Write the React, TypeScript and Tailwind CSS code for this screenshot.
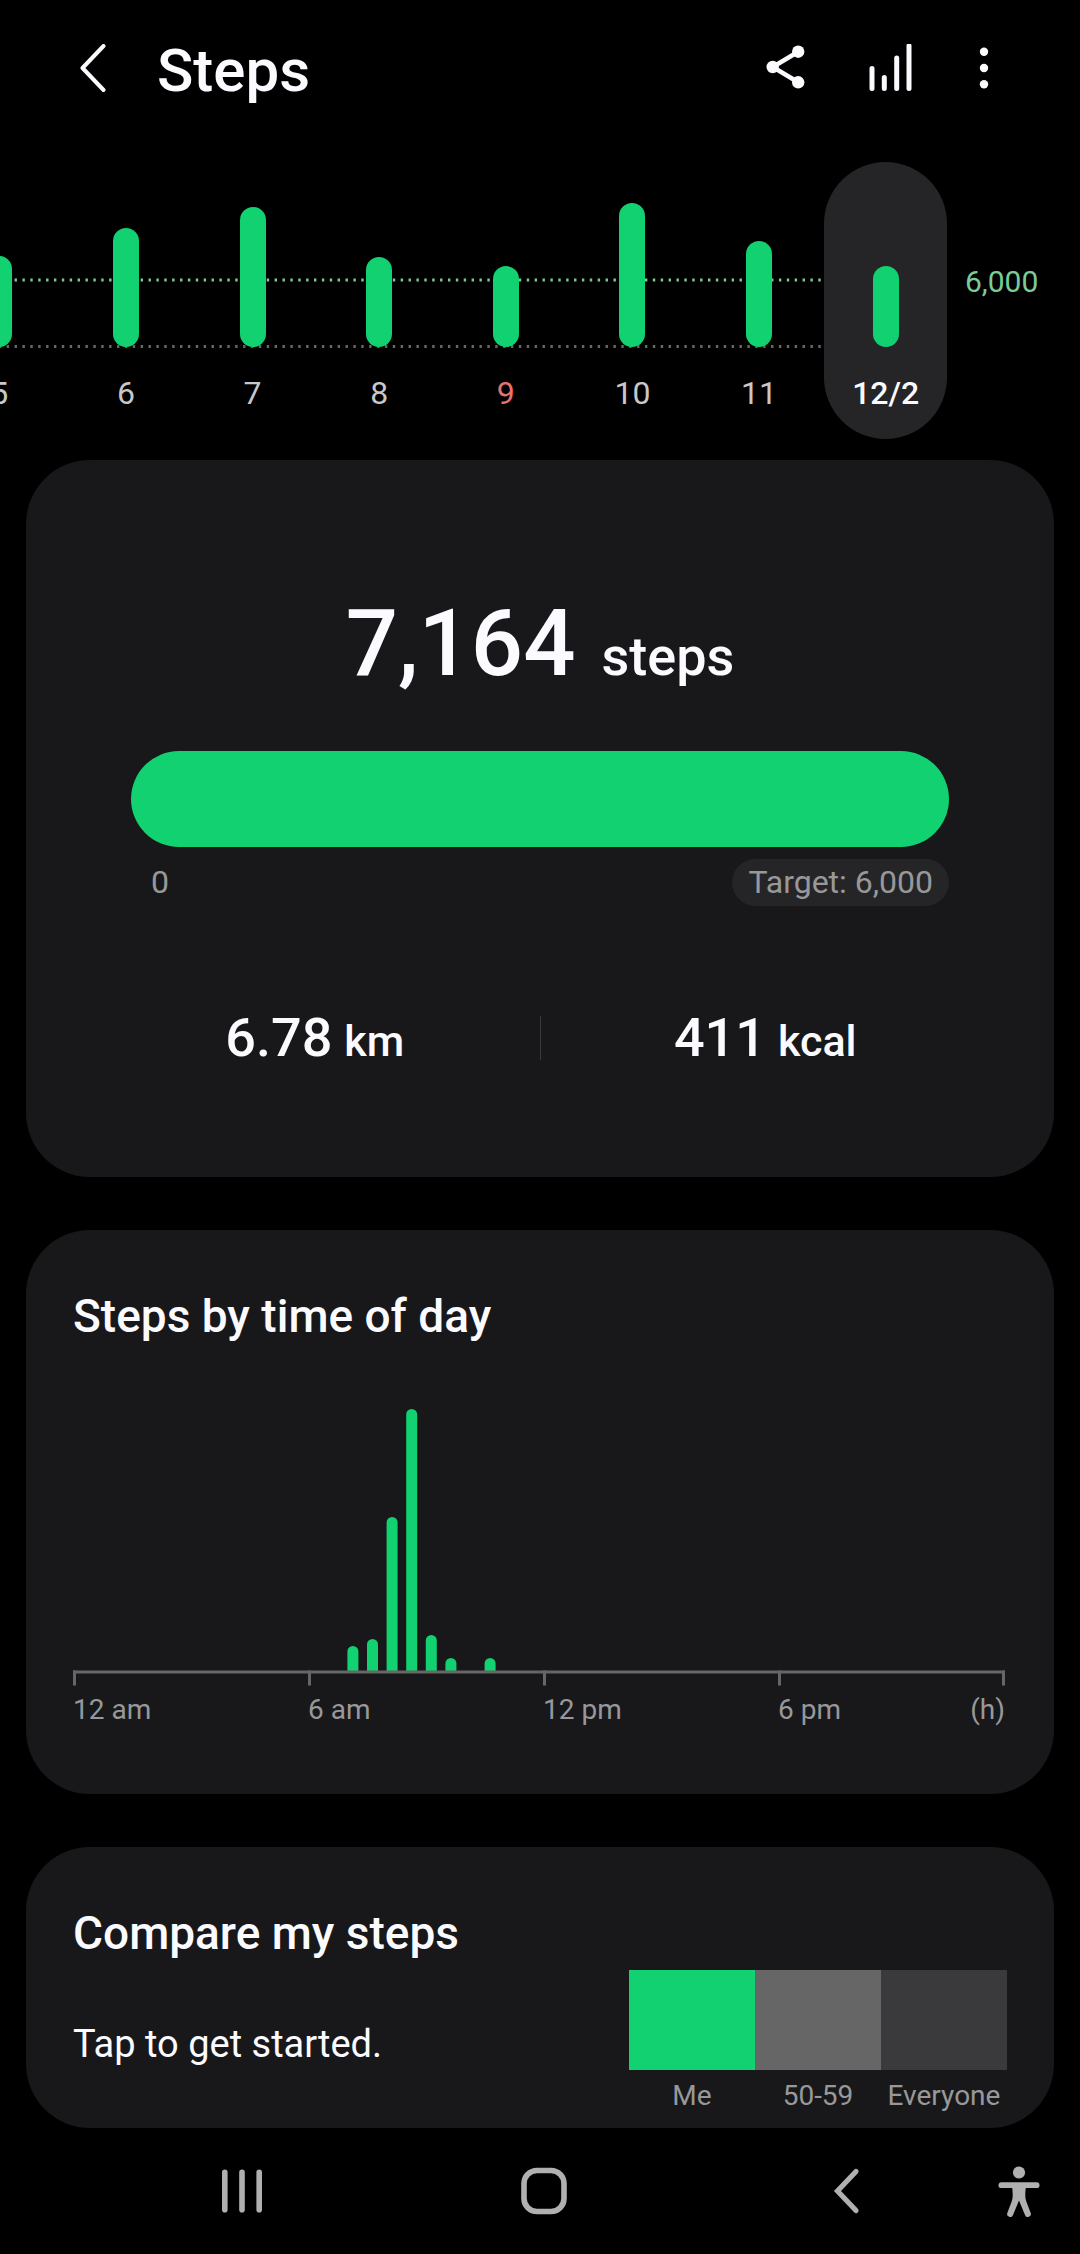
import React, { useState } from 'react';
import clsx from 'clsx';

const days = [
  { label: '5', height: 91 },
  { label: '6', height: 119 },
  { label: '7', height: 140 },
  { label: '8', height: 90 },
  { label: '9', height: 81, sunday: true },
  { label: '10', height: 144 },
  { label: '11', height: 106 },
  { label: '12/2', height: 81 },
];

// slot = half hour of the day
const halfHours = [
  { slot: 14, height: 25 },
  { slot: 15, height: 32 },
  { slot: 16, height: 154 },
  { slot: 17, height: 262 },
  { slot: 18, height: 36 },
  { slot: 19, height: 13 },
  { slot: 21, height: 13 },
];

const ticks = [0, 235, 470, 705, 929];

const groups = [
  { label: 'Me', color: 'bg-[#12d170]' },
  { label: '50-59', color: 'bg-[#666666]' },
  { label: 'Everyone', color: 'bg-[#3a3a3c]' },
];

const Header = () => (
  <header className="flex h-[136px] items-center pl-[69px] pr-[82px] text-[#fafaff]">
    <button aria-label="Back">
      <svg className="h-12 w-12" viewBox="0 0 48 48" fill="none" stroke="currentColor" strokeWidth="4" strokeLinecap="round" strokeLinejoin="round">
        <path d="M34.5 2L13.5 24L34.5 46" />
      </svg>
    </button>
    <h1 className="ml-10 flex-1 pt-1.5 text-[60px] leading-[72px] font-medium">Steps</h1>
    <div className="flex items-center gap-14">
      <button aria-label="Share">
        <svg className="h-12 w-12" viewBox="0 0 48 48" fill="currentColor">
          <path d="M36.2 7.7L10.7 23L36.2 38.3" fill="none" stroke="currentColor" strokeWidth="4.5" />
          <circle cx="10.7" cy="23" r="6.2" />
          <circle cx="36.2" cy="7.7" r="6.2" />
          <circle cx="36.2" cy="38.3" r="6.2" />
        </svg>
      </button>
      <button aria-label="Statistics">
        <svg className="h-12 w-12" viewBox="0 0 48 48" stroke="currentColor" strokeWidth="5" strokeLinecap="round">
          <path d="M6 24.5V44.5M18.3 33.5V44.5M30.7 14V44.5M43 1.7V44.5" />
        </svg>
      </button>
      <button aria-label="More options">
        <svg className="h-12 w-7" viewBox="0 0 28 48" fill="currentColor">
          <circle cx="14" cy="7.7" r="4.2" />
          <circle cx="14" cy="24" r="4.2" />
          <circle cx="14" cy="40.3" r="4.2" />
        </svg>
      </button>
    </div>
  </header>
);

const WeekStrip = () => {
  const [selected, setSelected] = useState(7);

  return (
    <section className="relative mt-[26px] flex overflow-hidden">
      {/* Target and zero lines */}
      <svg className="absolute left-0 top-[116px] h-[72px] w-[822px]" strokeWidth="3" strokeDasharray="2.4 5.48" strokeDashoffset="1.2">
        <line x1="0" y1="2" x2="822" y2="2" stroke="#7bcb98" />
        <line x1="0" y1="68.5" x2="822" y2="68.5" stroke="#6a6668" />
      </svg>
      <div className="relative -ml-16 grid flex-1 grid-cols-8">
        {days.map((day, index) => (
          <button
            key={day.label}
            onClick={() => setSelected(index)}
            className={clsx(
              'mx-0.5 flex h-[277px] flex-col items-center justify-end gap-[26px] rounded-full pb-[26px]',
              index === selected && 'bg-[#252527]'
            )}
          >
            <span className="w-[26px] rounded-full bg-[#12d170]" style={{ height: day.height }} />
            <span
              className={clsx(
                'text-[32px] leading-10',
                index === selected ? 'font-medium text-[#fafaff]' : day.sunday ? 'text-[#e5736b]' : 'text-[#c8c8ca]'
              )}
            >
              {day.label}
            </span>
          </button>
        ))}
      </div>
      <span className="mt-[100px] w-[131px] pl-4 text-[30px] leading-10 text-[#7bcb98]">6,000</span>
    </section>
  );
};

const Summary = () => (
  <section className="rounded-[64px] bg-[#18181a] pt-[130px] pb-[107px] text-[#fafaff]">
    <div className="px-[105px]">
      <p className="flex items-baseline justify-center gap-[26px] font-medium">
        <span className="text-[92px] leading-[108px]">7,164</span>
        <span className="text-[54px] leading-[64px]">steps</span>
      </p>
      <div
        role="progressbar"
        aria-label="Steps"
        aria-valuemin={0}
        aria-valuemax={6000}
        aria-valuenow={6000}
        className="mt-[53px] h-24 rounded-full bg-[#12d170]"
      />
      <div className="mt-3 flex items-center justify-between pl-5 text-[32px] leading-[47px] text-[#98989a]">
        <span>0</span>
        <span className="rounded-full bg-[#252527] px-4">Target: 6,000</span>
      </div>
    </div>
    <div className="mt-[100px] flex items-center px-16 font-medium">
      <p className="flex flex-1 items-baseline justify-center gap-3">
        <span className="text-[54px] leading-[64px]">6.78</span>
        <span className="text-[43px] leading-[48px]">km</span>
      </p>
      <span className="h-11 w-px bg-[#3a3a3c]" />
      <p className="flex flex-1 items-baseline justify-center gap-3">
        <span className="text-[54px] leading-[64px]">411</span>
        <span className="text-[43px] leading-[48px]">kcal</span>
      </p>
    </div>
  </section>
);

const TimeOfDay = () => (
  <section className="rounded-[64px] bg-[#18181a] pt-[58px] pb-[66px] pl-[47px] pr-[49px]">
    <h2 className="text-[46px] leading-[56px] font-medium text-[#fafaff]">Steps by time of day</h2>
    <svg className="mt-[65px] w-full" viewBox="0 0 932 277" role="img" aria-label="Steps by time of day">
      {halfHours.map(({ slot, height }) => (
        <path
          key={slot}
          fill="#12d170"
          d={`M${slot * 19.6} 262v${5.5 - height}a5.5 5.5 0 0 1 11 0v${height - 5.5}z`}
        />
      ))}
      <rect y="261.5" width="932" height="3" fill="#666666" />
      {ticks.map((x) => (
        <rect key={x} x={x} y="261.5" width="3" height="15" fill="#666666" />
      ))}
    </svg>
    <div className="mt-1.5 grid grid-cols-[235fr_235fr_235fr_227fr] text-[28px] leading-9 text-[#98989a]">
      <span>12 am</span>
      <span>6 am</span>
      <span>12 pm</span>
      <span className="flex justify-between">
        <span>6 pm</span>
        <span>(h)</span>
      </span>
    </div>
  </section>
);

const Compare = () => (
  <section className="flex items-end justify-between rounded-[64px] bg-[#18181a] pt-[58px] pb-3.5 px-[47px] text-[#fafaff]">
    <div className="self-start">
      <h2 className="text-[46px] leading-[56px] font-medium">Compare my steps</h2>
      <button className="mt-[59px] text-[38px] leading-[48px]">Tap to get started.</button>
    </div>
    <div className="mt-[65px] grid w-[378px] grid-cols-3 text-center text-[28px] leading-9 text-[#98989a]">
      {groups.map((group) => (
        <div key={group.label}>
          <div className={clsx('mb-2 h-[100px]', group.color)} />
          {group.label}
        </div>
      ))}
    </div>
  </section>
);

const NavBar = () => (
  <nav className="flex h-[126px] items-center pl-[91px] pr-[39px] text-[#b0b0b0]">
    <button aria-label="Recent apps" className="flex flex-1 justify-center">
      <svg className="h-12 w-12" viewBox="0 0 48 48" stroke="currentColor" strokeWidth="5.6" strokeLinecap="round">
        <path d="M6.8 5.3V42.7M24 5.3V42.7M41.2 5.3V42.7" />
      </svg>
    </button>
    <button aria-label="Home" className="flex flex-1 justify-center">
      <svg className="h-12 w-12" viewBox="0 0 48 48" fill="none" stroke="currentColor" strokeWidth="5.6">
        <rect x="4" y="3.5" width="40" height="41" rx="13" />
      </svg>
    </button>
    <button aria-label="Back" className="flex flex-1 justify-center">
      <svg className="h-12 w-12" viewBox="0 0 48 48" fill="none" stroke="currentColor" strokeWidth="5.2" strokeLinecap="round">
        <path d="M34 4.5L15.5 24L34 43.5" />
      </svg>
    </button>
    <button aria-label="Accessibility">
      <svg className="h-[52px] w-11" viewBox="2 -1 44 52" fill="currentColor">
        <circle cx="24" cy="6.5" r="6.1" />
        <rect x="3.5" y="16.3" width="41" height="5.8" rx="2.9" />
        <path d="M17 20C18 28 18 32 16.5 36L12.3 47A3 3 0 0 0 18 49L24 34.5L30 49A3 3 0 0 0 35.7 47L31.5 36C30 32 30 28 31 20Z" />
      </svg>
    </button>
  </nav>
);

const App = () => {
  return (
    <div className="min-h-screen bg-black font-['Roboto',sans-serif]">
      <Header />
      <WeekStrip />
      <main className="mt-[21px] flex flex-col gap-[53px] px-[26px]">
        <Summary />
        <TimeOfDay />
        <Compare />
      </main>
      <NavBar />
    </div>
  );
};

export default App;
